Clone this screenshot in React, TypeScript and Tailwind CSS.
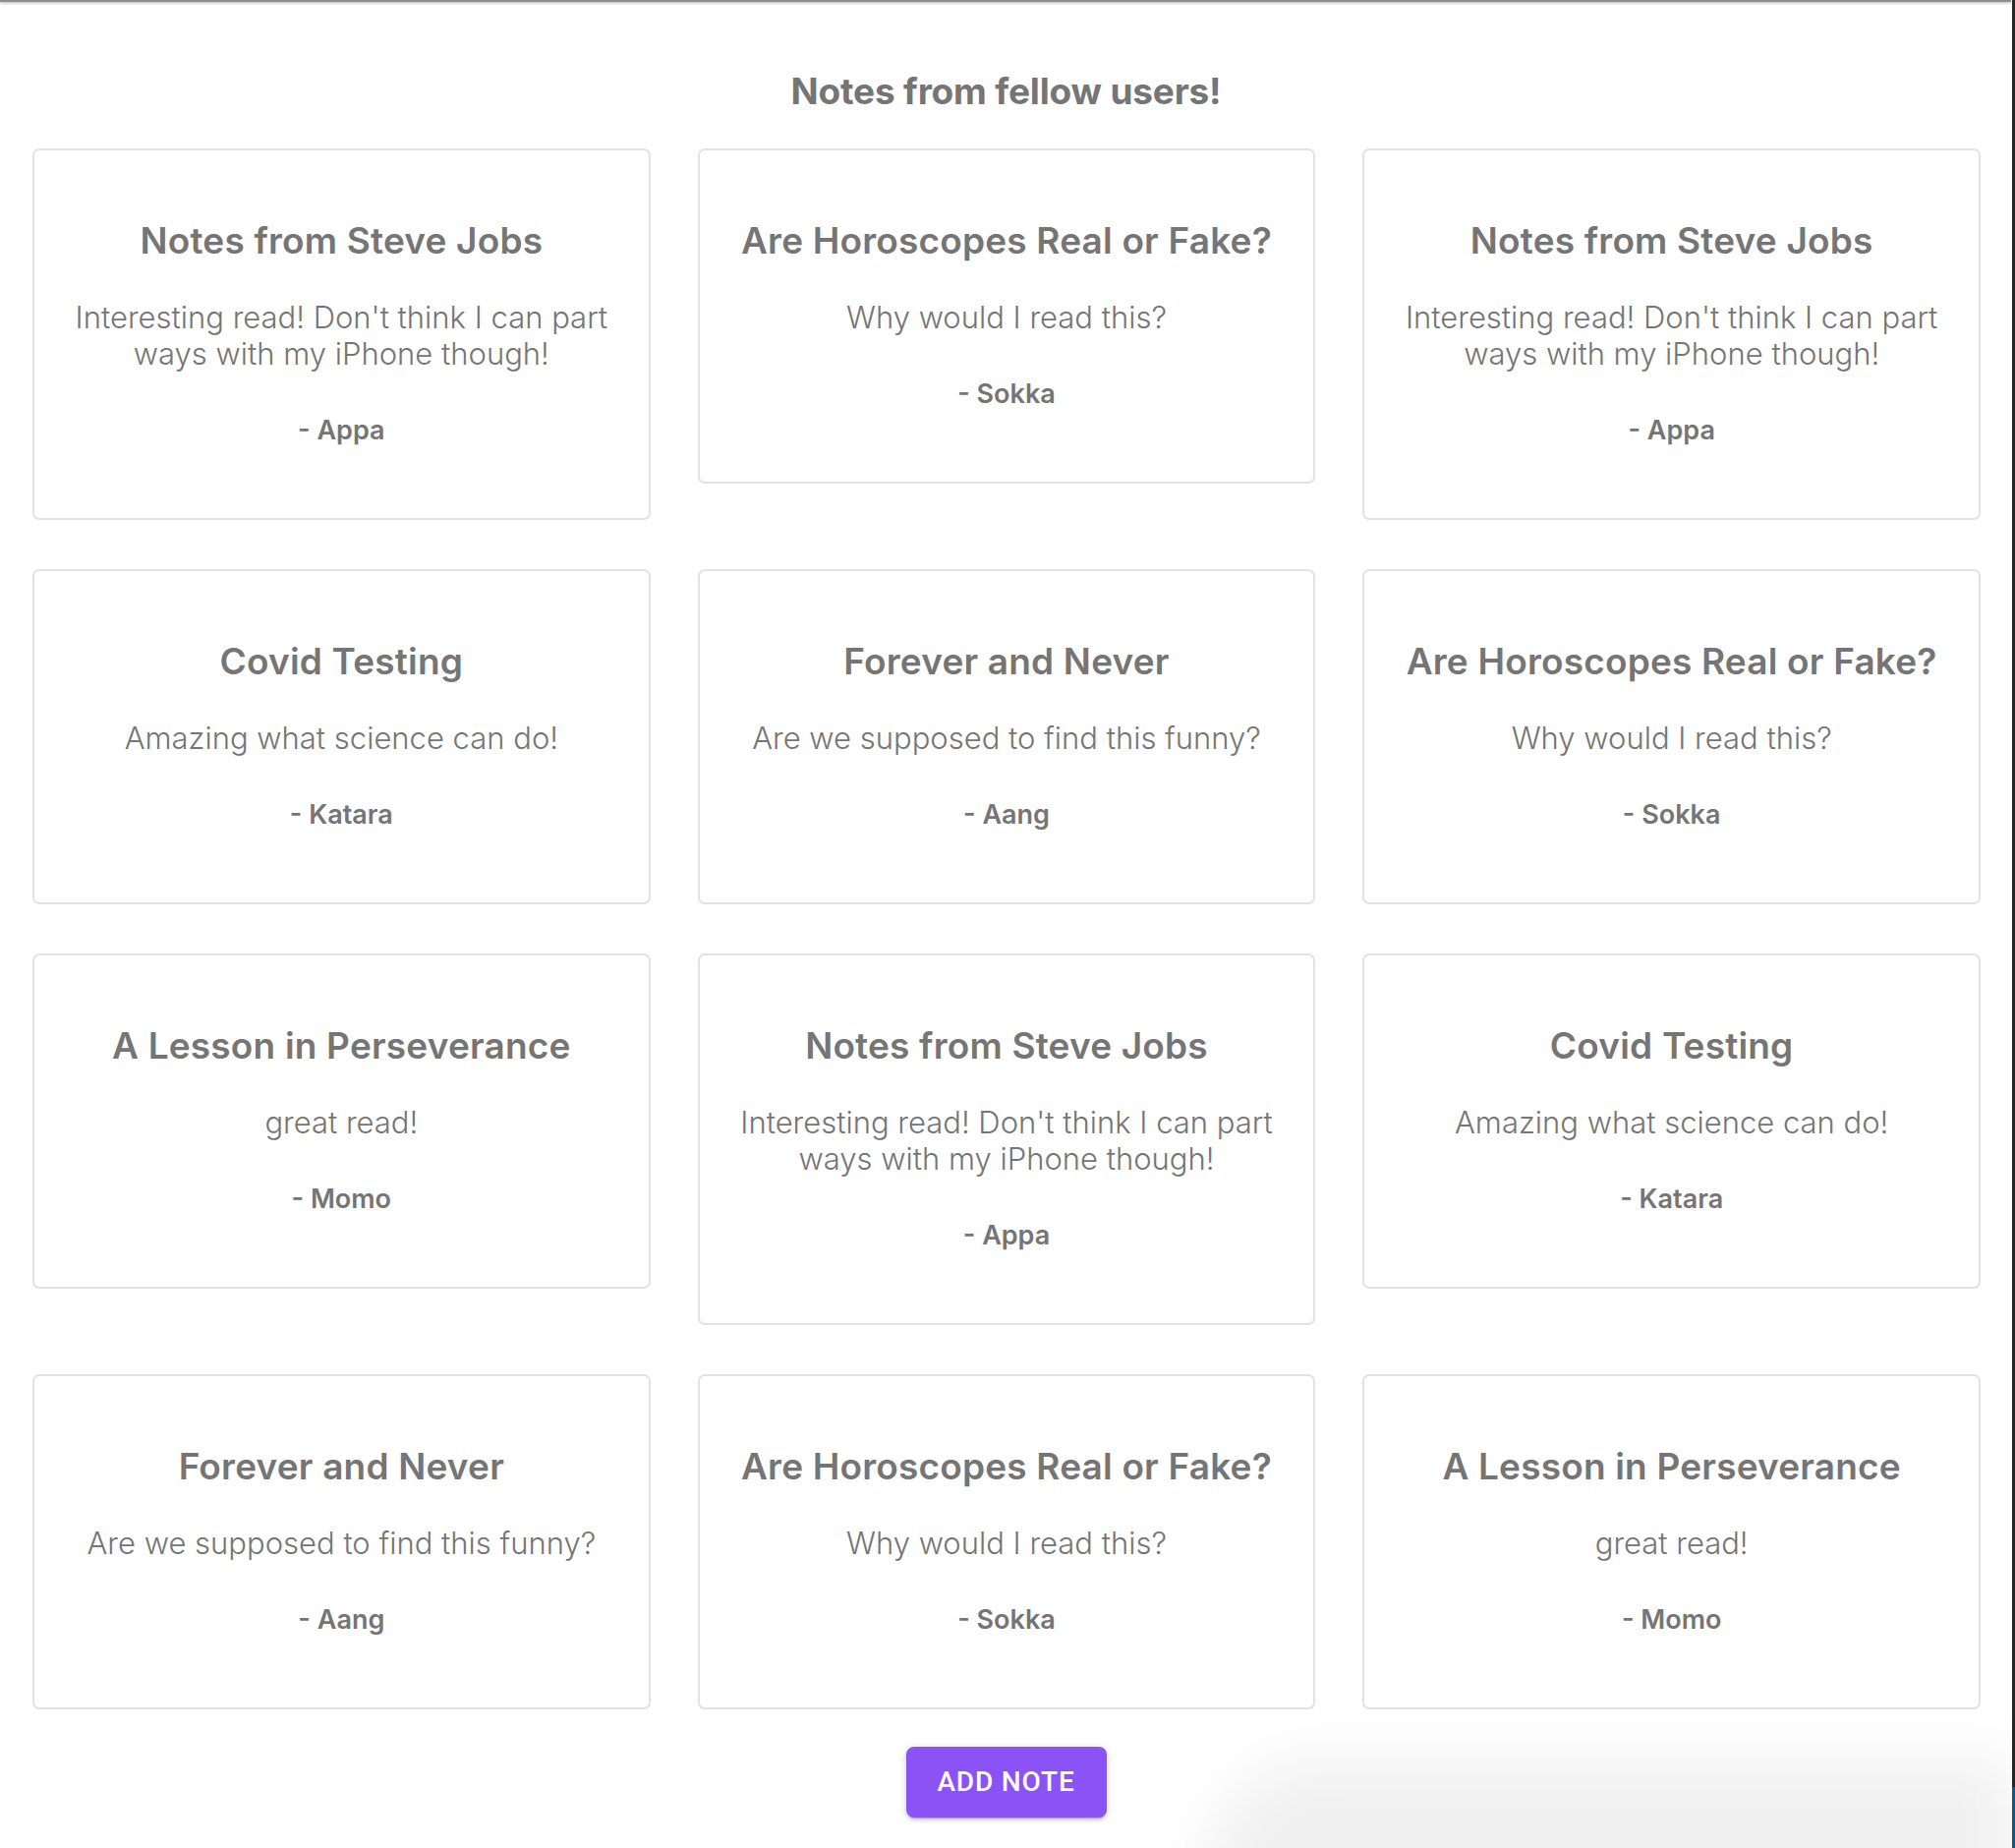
import React from 'react';

type Note = { title: string; body: string; author: string };

const notes: Note[] = [
  { title: 'Notes from Steve Jobs', body: "Interesting read! Don't think I can part ways with my iPhone though!", author: 'Appa' },
  { title: 'Are Horoscopes Real or Fake?', body: 'Why would I read this?', author: 'Sokka' },
  { title: 'Notes from Steve Jobs', body: "Interesting read! Don't think I can part ways with my iPhone though!", author: 'Appa' },
  { title: 'Covid Testing', body: 'Amazing what science can do!', author: 'Katara' },
  { title: 'Forever and Never', body: 'Are we supposed to find this funny?', author: 'Aang' },
  { title: 'Are Horoscopes Real or Fake?', body: 'Why would I read this?', author: 'Sokka' },
  { title: 'A Lesson in Perseverance', body: 'great read!', author: 'Momo' },
  { title: 'Notes from Steve Jobs', body: "Interesting read! Don't think I can part ways with my iPhone though!", author: 'Appa' },
  { title: 'Covid Testing', body: 'Amazing what science can do!', author: 'Katara' },
  { title: 'Forever and Never', body: 'Are we supposed to find this funny?', author: 'Aang' },
  { title: 'Are Horoscopes Real or Fake?', body: 'Why would I read this?', author: 'Sokka' },
  { title: 'A Lesson in Perseverance', body: 'great read!', author: 'Momo' },
];

const NoteCard: React.FC<{ note: Note }> = ({ note }) => (
  <div className="border-2 border-[#e2e2e2] rounded-[7px] bg-white px-[30px] pt-[71px] pb-[73px] text-center text-[#757575]">
    <h3 className="text-[37px] leading-[42px] font-semibold tracking-[0.005em]">{note.title}</h3>
    <p className="mt-[38px] text-[31px] leading-[37px] font-light">{note.body}</p>
    <p className="mt-[44px] text-[27px] leading-[32px] font-semibold">- {note.author}</p>
  </div>
);

export default function App() {
  return (
    <div className="relative flex min-h-[1880px] bg-white overflow-hidden" style={{ fontFamily: 'Inter, "Noto Sans", sans-serif' }}>
      <div className="flex-1 flex flex-col">
        <div className="h-[2px] bg-[#8f8f8f] shadow-[0_1px_3px_rgba(0,0,0,0.35)] mr-[1px]" />
        <h1 className="pt-[70px] text-center text-[37px] leading-[42px] font-bold tracking-[-0.005em] text-[#757575]">Notes from fellow users!</h1>
        <div className="mt-[37px] px-[33px] pr-[32px] grid grid-cols-3 gap-x-[48px] gap-y-[50px] items-start">
          {notes.map((n, i) => (
            <NoteCard key={i} note={n} />
          ))}
        </div>
        <div className="mt-[38px] flex justify-center">
          <button
            className="w-[204px] h-[72px] rounded-[8px] bg-[#8b52f6] text-white text-[28px] font-medium uppercase tracking-[0.03em] shadow-[0_3px_2px_-2px_rgba(0,0,0,0.2),0_2px_4px_0_rgba(0,0,0,0.14),0_1px_10px_0_rgba(0,0,0,0.12)]"
            style={{ fontFamily: 'Roboto, "Liberation Sans", sans-serif' }}
          >
            Add Note
          </button>
        </div>
      </div>
      {/* window edge */}
      <div className="w-[3px] flex flex-col bg-[#262626]">
        <div className="mt-auto h-[62px] bg-[#0b5c91]" />
      </div>
      {/* soft shadow bottom right */}
      <div className="absolute right-[3px] bottom-[-80px] w-[820px] h-[170px] rounded-tl-[120px] bg-black/[0.06] blur-[30px] pointer-events-none" />
    </div>
  );
}
